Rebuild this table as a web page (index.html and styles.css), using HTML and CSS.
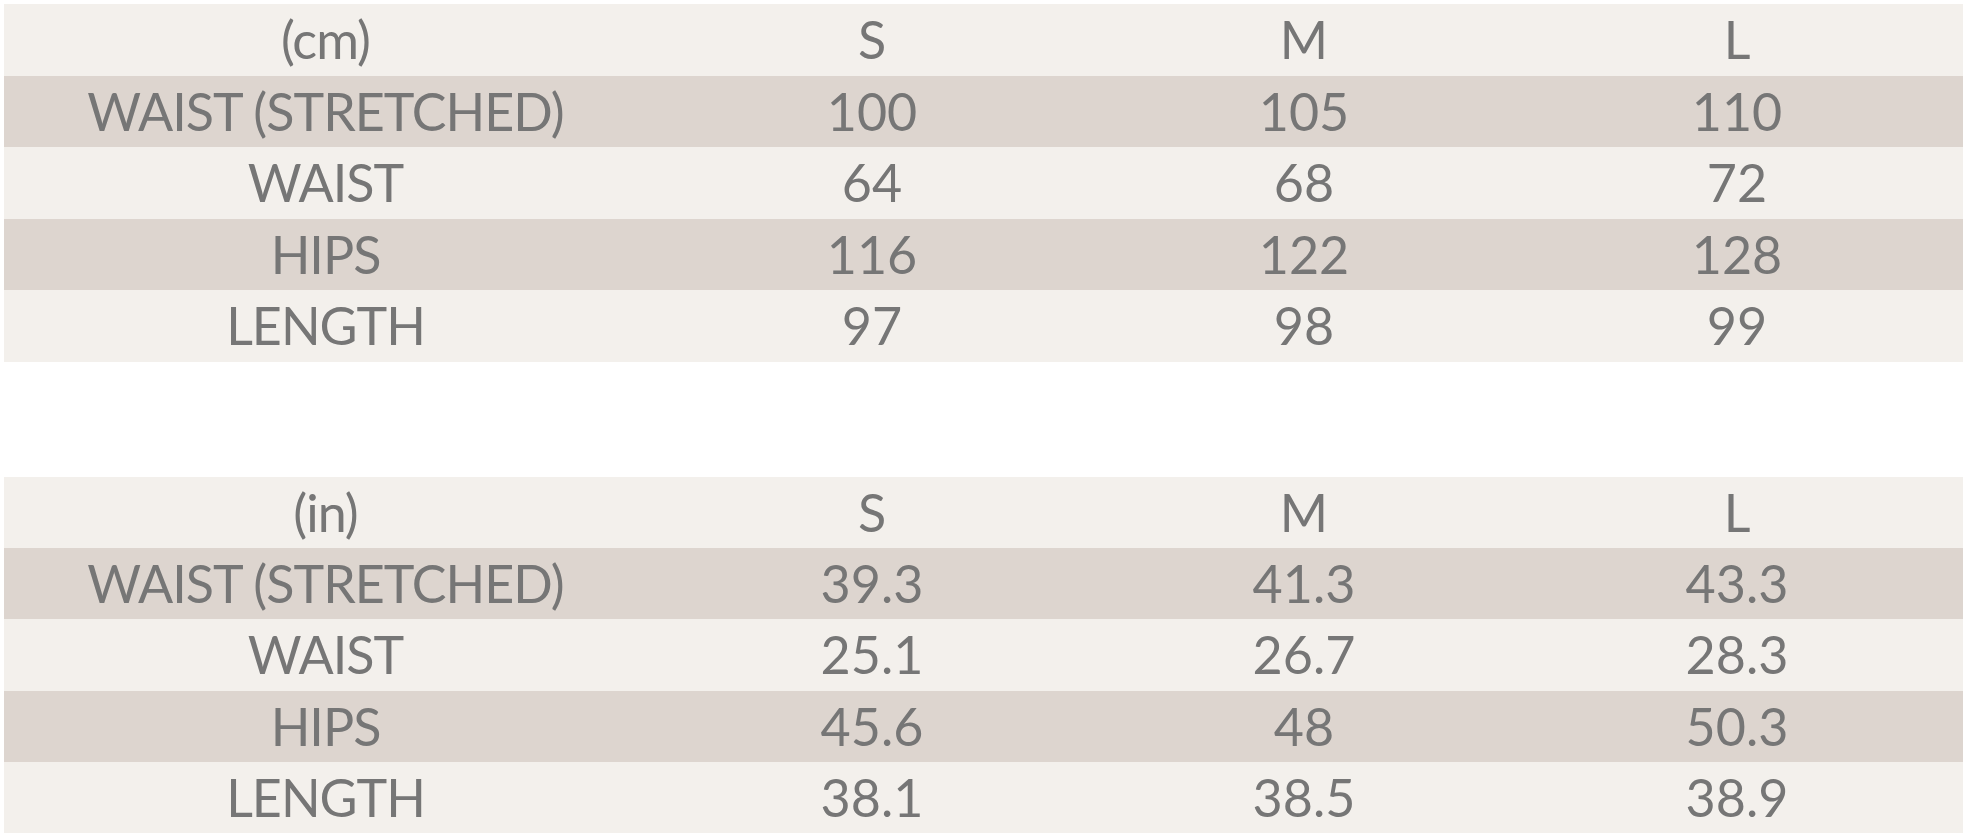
FILE: index.html
```html
<!DOCTYPE html>
<html>
<head>
<meta charset="utf-8">
<link rel="stylesheet" href="styles.css">
</head>
<body>
<div class="sheet">
  <div class="table t-cm">
    <div class="row light"><div class="cell label">(cm)</div><div class="cell">S</div><div class="cell">M</div><div class="cell">L</div></div>
    <div class="row dark"><div class="cell label">WAIST (STRETCHED)</div><div class="cell">100</div><div class="cell">105</div><div class="cell">110</div></div>
    <div class="row light"><div class="cell label">WAIST</div><div class="cell">64</div><div class="cell">68</div><div class="cell">72</div></div>
    <div class="row dark"><div class="cell label">HIPS</div><div class="cell">116</div><div class="cell">122</div><div class="cell">128</div></div>
    <div class="row light"><div class="cell label">LENGTH</div><div class="cell">97</div><div class="cell">98</div><div class="cell">99</div></div>
  </div>
  <div class="table t-in">
    <div class="row light"><div class="cell label">(in)</div><div class="cell">S</div><div class="cell">M</div><div class="cell">L</div></div>
    <div class="row dark"><div class="cell label">WAIST (STRETCHED)</div><div class="cell">39.3</div><div class="cell">41.3</div><div class="cell">43.3</div></div>
    <div class="row light"><div class="cell label">WAIST</div><div class="cell">25.1</div><div class="cell">26.7</div><div class="cell">28.3</div></div>
    <div class="row dark"><div class="cell label">HIPS</div><div class="cell">45.6</div><div class="cell">48</div><div class="cell">50.3</div></div>
    <div class="row light"><div class="cell label">LENGTH</div><div class="cell">38.1</div><div class="cell">38.5</div><div class="cell">38.9</div></div>
  </div>
</div>
</body>
</html>
```

FILE: styles.css
```css
html, body {
  margin: 0;
  padding: 0;
  background: #ffffff;
}

body {
  font-family: Lato, "Open Sans", "Liberation Sans", sans-serif;
  color: #767676;
}

.sheet {
  padding: 4px 7px 0 4px;
  display: flex;
  flex-direction: column;
  gap: 115.5px;
  width: 1959px;
}

.table {
  display: flex;
  flex-direction: column;
}

.row {
  display: grid;
  grid-template-columns: 643px 450px 414px 452px;
}

.t-cm .row {
  height: 71.5px;
  line-height: 71.5px;
}

.t-in .row {
  height: 71.2px;
  line-height: 71.2px;
}

.light {
  background: #f3f0ec;
}

.dark {
  background: #ddd5cf;
}

.cell {
  text-align: center;
  font-size: 52px;
  white-space: nowrap;
}

.label {
  letter-spacing: -1px;
}
```
